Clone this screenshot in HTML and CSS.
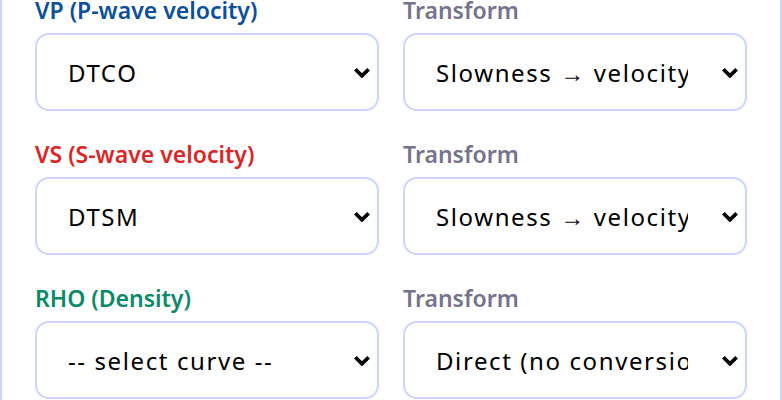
FILE: index.html
```html
<!DOCTYPE html>
<html lang="en">
<head>
    <meta charset="UTF-8">
    <meta name="viewport" content="width=device-width, initial-scale=1.0">
    <title>Curve Mapping</title>
    <link rel="stylesheet" href="styles.css">
</head>
<body>
    <div class="panel">
        <div class="curve-grid">
            <div class="field">
                <label class="field-label vp" for="vpCurve">VP (P-wave velocity)</label>
                <div class="select-wrap">
                    <select id="vpCurve" class="field-select">
                        <option>DTCO</option>
                        <option>-- select curve --</option>
                    </select>
                    <svg class="chevron" viewBox="0 0 16 10"><polyline points="2,2 8,8 14,2"/></svg>
                </div>
            </div>
            <div class="field">
                <label class="field-label transform" for="vpTransform">Transform</label>
                <div class="select-wrap">
                    <select id="vpTransform" class="field-select">
                        <option>Slowness → velocity (µs/ft → m/s)</option>
                        <option>Direct (no conversion)</option>
                    </select>
                    <svg class="chevron" viewBox="0 0 16 10"><polyline points="2,2 8,8 14,2"/></svg>
                </div>
            </div>

            <div class="field">
                <label class="field-label vs" for="vsCurve">VS (S-wave velocity)</label>
                <div class="select-wrap">
                    <select id="vsCurve" class="field-select">
                        <option>DTSM</option>
                        <option>-- select curve --</option>
                    </select>
                    <svg class="chevron" viewBox="0 0 16 10"><polyline points="2,2 8,8 14,2"/></svg>
                </div>
            </div>
            <div class="field">
                <label class="field-label transform" for="vsTransform">Transform</label>
                <div class="select-wrap">
                    <select id="vsTransform" class="field-select">
                        <option>Slowness → velocity (µs/ft → m/s)</option>
                        <option>Direct (no conversion)</option>
                    </select>
                    <svg class="chevron" viewBox="0 0 16 10"><polyline points="2,2 8,8 14,2"/></svg>
                </div>
            </div>

            <div class="field">
                <label class="field-label rho" for="rhoCurve">RHO (Density)</label>
                <div class="select-wrap">
                    <select id="rhoCurve" class="field-select">
                        <option>-- select curve --</option>
                        <option>RHOB</option>
                    </select>
                    <svg class="chevron" viewBox="0 0 16 10"><polyline points="2,2 8,8 14,2"/></svg>
                </div>
            </div>
            <div class="field">
                <label class="field-label transform" for="rhoTransform">Transform</label>
                <div class="select-wrap">
                    <select id="rhoTransform" class="field-select">
                        <option>Direct (no conversion)</option>
                        <option>Slowness → velocity (µs/ft → m/s)</option>
                    </select>
                    <svg class="chevron" viewBox="0 0 16 10"><polyline points="2,2 8,8 14,2"/></svg>
                </div>
            </div>
        </div>
    </div>
</body>
</html>
```

FILE: styles.css
```css
html, body {
    margin: 0;
    background-color: #fff;
    font-family: "Noto Sans", Arial, sans-serif;
}
.panel {
    border-left: 2px solid #cdd5fc;
    border-right: 2px solid #cdd5fc;
    padding: 0 33px;
    height: 400px;
    overflow: hidden;
}
.curve-grid {
    display: grid;
    grid-template-columns: 1fr 1fr;
    column-gap: 24px;
    row-gap: 29px;
    margin-top: -4px;
}
.field-label {
    display: block;
    font-size: 23px;
    font-weight: 600;
    line-height: 28px;
    margin-bottom: 9px;
}
.field-label.vp {
    color: #0b4f9c;
}
.field-label.vs {
    color: #dc2626;
}
.field-label.rho {
    color: #0b8a68;
}
.field-label.transform {
    color: #77738f;
}
.select-wrap {
    position: relative;
}
.field-select {
    display: block;
    width: 100%;
    height: 78px;
    padding: 0 57px 0 31px;
    border: 2px solid #cdd5fc;
    border-radius: 14px;
    background-color: #fff;
    color: #000;
    font-family: inherit;
    font-size: 24px;
    letter-spacing: 1.6px;
    box-sizing: border-box;
    appearance: none;
    -webkit-appearance: none;
}
.field-select:focus {
    outline: none;
    border-color: #818cf8;
}
.chevron {
    position: absolute;
    right: 8px;
    top: 50%;
    width: 18px;
    height: 11px;
    margin-top: -5px;
    fill: none;
    stroke: #000;
    stroke-width: 3.4;
    pointer-events: none;
}
```
